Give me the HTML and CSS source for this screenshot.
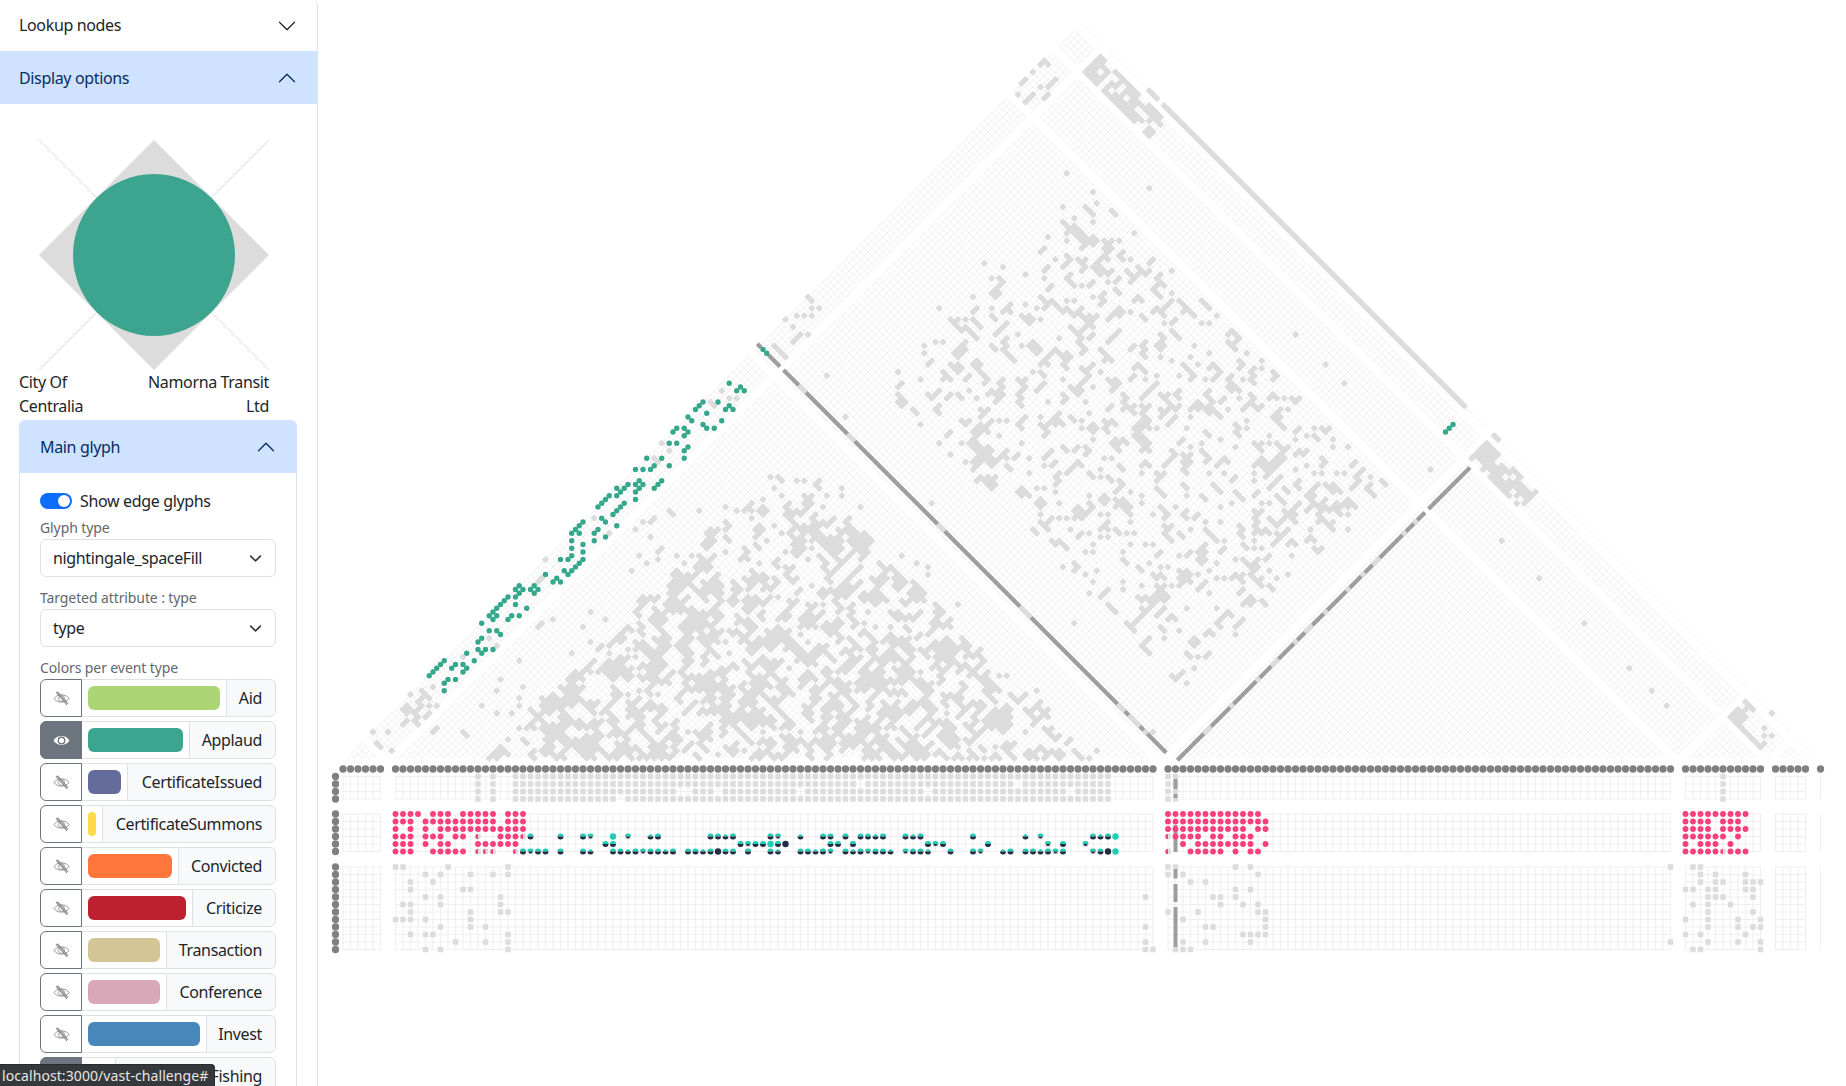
FILE: index.html
```html
<!DOCTYPE html>
<html lang="en">
<head>
<meta charset="utf-8">
<title>VAST Challenge</title>
<link rel="stylesheet" href="styles.css">
</head>
<body>
<aside class="sidebar">
  <div class="acc-head">
    <span>Lookup nodes</span>
    <svg class="chev" viewBox="0 0 16 16"><path d="M1.646 4.646a.5.5 0 0 1 .708 0L8 10.293l5.646-5.647a.5.5 0 0 1 .708.708l-6 6a.5.5 0 0 1-.708 0l-6-6a.5.5 0 0 1 0-.708z"/></svg>
  </div>
  <div class="acc-head active">
    <span>Display options</span>
    <svg class="chev up" viewBox="0 0 16 16"><path d="M1.646 4.646a.5.5 0 0 1 .708 0L8 10.293l5.646-5.647a.5.5 0 0 1 .708.708l-6 6a.5.5 0 0 1-.708 0l-6-6a.5.5 0 0 1 0-.708z"/></svg>
  </div>
  <svg class="legend" viewBox="0 0 230 230">
    <line x1="0" y1="0" x2="230" y2="230"/>
    <line x1="230" y1="0" x2="0" y2="230"/>
    <polygon points="115,0 230,115 115,230 0,115"/>
    <circle cx="115" cy="115" r="81"/>
  </svg>
  <div class="names">
    <div class="name-left">City Of Centralia</div>
    <div class="name-right">Namorna Transit Ltd</div>
  </div>
  <section class="inner">
    <div class="inner-head">
      <span>Main glyph</span>
      <svg class="chev up" viewBox="0 0 16 16"><path d="M1.646 4.646a.5.5 0 0 1 .708 0L8 10.293l5.646-5.647a.5.5 0 0 1 .708.708l-6 6a.5.5 0 0 1-.708 0l-6-6a.5.5 0 0 1 0-.708z"/></svg>
    </div>
    <div class="inner-body">
      <div class="switch-row"><span class="switch"></span><span>Show edge glyphs</span></div>
      <div class="field-label">Glyph type</div>
      <div class="select"><span>nightingale_spaceFill</span><svg viewBox="0 0 16 16"><path d="m2 5 6 6 6-6"/></svg></div>
      <div class="field-label">Targeted attribute : type</div>
      <div class="select"><span>type</span><svg viewBox="0 0 16 16"><path d="m2 5 6 6 6-6"/></svg></div>
      <div class="field-label">Colors per event type</div>
      <div class="rows" id="rows"></div>
    </div>
  </section>
</aside>
<main class="canvas" id="canvas"></main>
<div class="status">localhost:3000/vast-challenge#</div>
<script src="matrix.js"></script>
</body>
</html>
```
FILE: styles.css
```css
* { box-sizing: border-box; }
html, body { margin: 0; height: 100%; }
body {
  display: flex;
  overflow: hidden;
  height: 1086px;
  background: #fff;
  color: #212529;
  font-family: "Noto Sans", sans-serif;
  font-size: 16px;
  line-height: 24px;
  letter-spacing: -0.35px;
}
.sidebar {
  flex: 0 0 318px;
  height: 1086px;
  overflow: hidden;
  border-right: 1px solid #dee2e6;
  border-top-right-radius: 6px;
}
.acc-head {
  height: 51px;
  padding: 0 20px 0 19px;
  display: flex;
  align-items: center;
  justify-content: space-between;
}
.acc-head span { position: relative; top: -1px; }
.acc-head.active span { top: 0; }
.acc-head.active {
  height: 53px;
  background: #cfe2ff;
  color: #052c65;
}
.chev { width: 20px; height: 20px; fill: #212529; }
.chev.up { transform: rotate(180deg); fill: #052c65; }
.legend { display: block; width: 230px; height: 230px; margin: 36px 0 0 39px; }
.legend line { stroke: #cfcfcf; stroke-width: 0.7; }
.legend polygon { fill: #dcdcdc; }
.legend circle { fill: #3da58f; }
.names {
  display: flex;
  justify-content: space-between;
  width: 250px;
  margin: 0 0 2px 19px;
}
.name-left { width: 80px; }
.name-right { width: 130px; text-align: right; }
.inner { width: 278px; margin-left: 19px; }
.inner-head {
  height: 53px;
  padding: 0 21px 0 21px;
  display: flex;
  align-items: center;
  justify-content: space-between;
  background: #cfe2ff;
  color: #052c65;
  border-radius: 6px 6px 0 0;
}
.inner-body {
  padding: 16px 20px 0;
  border-left: 1px solid #dee2e6;
  border-right: 1px solid #dee2e6;
}
.switch-row { display: flex; align-items: center; gap: 8px; height: 24px; margin-bottom: 5px; }
.switch {
  width: 32px;
  height: 16px;
  border-radius: 8px;
  background: #0d6efd;
  display: flex;
  justify-content: flex-end;
  align-items: center;
  padding-right: 2px;
}
.switch::after { content: ""; width: 12px; height: 12px; border-radius: 50%; background: #fff; }
.field-label { font-size: 14px; line-height: 19px; padding-bottom: 2px; color: #5f6770; letter-spacing: -0.1px; }
.select {
  height: 38px;
  margin-bottom: 11px;
  padding: 0 13px 0 12px;
  display: flex;
  align-items: center;
  justify-content: space-between;
  border: 1px solid #dee2e6;
  border-radius: 6px;
}
.select svg { width: 13px; height: 13px; fill: none; stroke: #343a40; stroke-width: 2; stroke-linecap: round; stroke-linejoin: round; }
.rows { display: flex; flex-direction: column; gap: 4px; }
.row { display: flex; height: 38px; }
.eye {
  flex: 0 0 42px;
  display: flex;
  align-items: center;
  justify-content: center;
  border: 1px solid #6c757d;
  border-radius: 6px 0 0 6px;
  background: #fff;
}
.eye svg { width: 17px; height: 17px; }
.eye.on { background: #6c757d; }
.eye .outline { fill: none; stroke: #9a9a9a; stroke-width: 1; }
.eye .slash { fill: none; stroke: #8a8a8a; stroke-width: 1.1; }
.eye .ball { fill: #fff; }
.eye .pupil { fill: #6c757d; }
.swatch-cell {
  display: flex;
  align-items: center;
  padding: 0 6px;
  border-top: 1px solid #dee2e6;
  border-bottom: 1px solid #dee2e6;
}
.swatch { display: block; height: 24px; border-radius: 6px; }
.row-label {
  flex: 1;
  display: flex;
  align-items: center;
  justify-content: flex-end;
  padding-right: 13px;
  border: 1px solid #dee2e6;
  border-radius: 0 6px 6px 0;
  background: #f8f9fa;
}
.canvas { flex: 1; height: 1086px; overflow: hidden; }
.canvas svg { display: block; }
.status {
  position: absolute;
  left: 0;
  bottom: 0;
  height: 22px;
  padding: 0 6px 0 2px;
  background: #35393b;
  border: 1px solid #2a2a2a;
  border-left: 0;
  border-bottom: 0;
  border-top-right-radius: 4px;
  color: #e6e6e6;
  font-size: 14px;
  line-height: 21px;
  letter-spacing: 0.08px;
  white-space: nowrap;
}
```
FILE: matrix.js
```js
(function () {
  var events = [
    ['Aid', '#acd576', 132, false], ['Applaud', '#3ca58f', 95, true],
    ['CertificateIssued', '#636c9b', 33, false], ['CertificateSummons', '#ffd94a', 8, false],
    ['Convicted', '#ff763c', 84, false], ['Criticize', '#bd2130', 98, false],
    ['Transaction', '#d3c596', 72, false], ['Conference', '#d8a8b9', 72, false],
    ['Invest', '#4787b9', 112, false], ['Fishing', '#cccccc', 21, true]
  ];
  var eyeOff = '<svg viewBox="0 0 17 17"><path class="outline" d="M1 8.5C4 3.6 13 3.6 16 8.5C13 13.4 4 13.4 1 8.5Z"/><circle class="outline" cx="8.5" cy="8.5" r="3"/><path class="slash" d="M3 2.2L14 14.8M4.4 1.6L15 13.6"/></svg>';
  var eyeOn = '<svg viewBox="0 0 17 17"><path class="ball" d="M0.5 8.5C4 2.6 13 2.6 16.5 8.5C13 14.4 4 14.4 0.5 8.5Z"/><circle class="pupil" cx="8.5" cy="8.5" r="3.9"/><circle class="ball" cx="8.5" cy="8.5" r="2.6"/></svg>';
  var rows = document.getElementById('rows');
  rows.innerHTML = events.map(function (e) {
    return '<div class="row"><div class="eye' + (e[3] ? ' on' : '') + '">' + (e[3] ? eyeOn : eyeOff) +
      '</div><div class="swatch-cell"><span class="swatch" style="width:' + e[2] + 'px;background:' + e[1] +
      '"></span></div><div class="row-label">' + e[0] + '</div></div>';
  }).join('');

  // --- matrix geometry: cells are addressed by node slots (i < j) ---
  var X0 = 343, S = 7.5, H = 3.75, BASE = 762, NODE_Y = 769;
  var groups = [[0, 5], [7, 108], [110, 177], [179, 189], [191, 195], [197, 197]];
  var rowGroups = [[776.5, 4], [814, 6], [867, 12]];
  var GRAY = '#dcdcdc', DARK = '#9d9d9d', GREEN = '#35a78d', PINK = '#f8417c', TEAL = '#1ecdb4', INK = '#252b40';
  function cx(i, j) { return X0 + H * (i + j); }
  function cy(i, j) { return BASE - H * (j - i); }
  function sx(s) { return X0 + S * s; }
  function snap(x, y) { return [Math.round((x + y - 1105) / 7.5), Math.round((x - y + 419) / 7.5)]; }
  function f(n) { return n.toFixed(2); }

  var seed = 20230611;
  function rnd() {
    seed = (seed + 0x6D2B79F5) | 0;
    var t = Math.imul(seed ^ (seed >>> 15), 1 | seed);
    t = (t + Math.imul(t ^ (t >>> 7), 61 | t)) ^ t;
    return ((t ^ (t >>> 14)) >>> 0) / 4294967296;
  }

  // lattice
  var lat = '';
  groups.forEach(function (a, ai) {
    groups.forEach(function (b, bi) {
      if (bi < ai) return;
      var i, j;
      if (ai === bi) {
        for (i = a[0]; i < a[1]; i++) lat += 'M' + f(cx(i, i + 1)) + ' ' + f(cy(i, i + 1)) + 'L' + f(cx(i, a[1])) + ' ' + f(cy(i, a[1]));
        for (j = a[0] + 1; j <= a[1]; j++) lat += 'M' + f(cx(a[0], j)) + ' ' + f(cy(a[0], j)) + 'L' + f(cx(j - 1, j)) + ' ' + f(cy(j - 1, j));
      } else {
        for (i = a[0]; i <= a[1]; i++) lat += 'M' + f(cx(i, b[0])) + ' ' + f(cy(i, b[0])) + 'L' + f(cx(i, b[1])) + ' ' + f(cy(i, b[1]));
        for (j = b[0]; j <= b[1]; j++) lat += 'M' + f(cx(a[0], j)) + ' ' + f(cy(a[0], j)) + 'L' + f(cx(a[1], j)) + ' ' + f(cy(a[1], j));
      }
    });
  });

  // gray cells
  var on = {};
  function key(i, j) { return i + ',' + j; }
  function put(i, j) { on[key(i, j)] = 1; }
  var noise = {};
  function coarse(i, j, size) {
    var k = Math.floor(i / size) + ':' + Math.floor(j / size) + ':' + size;
    if (!(k in noise)) noise[k] = 0.72 + rnd() * 0.56;
    return noise[k];
  }
  function fill(iMin, iMax, jMin, jMax, bonus, prob) {
    for (var i = iMin; i <= iMax; i++) {
      for (var j = jMax; j >= jMin; j--) {
        if (j <= i) continue;
        var base = prob(i, j);
        if (base <= 0) continue;
        var n = (on[key(i - 1, j)] ? 1 : 0) + (on[key(i, j + 1)] ? 1 : 0);
        if (rnd() < base * coarse(i, j, 7) + (base > 0.1 ? n * bonus : 0)) put(i, j);
      }
    }
  }
  function block(iMin, iMax, jMin, jMax, prob) {
    for (var i = iMin; i <= iMax; i++) {
      for (var j = jMin; j <= jMax; j++) {
        if (rnd() < prob(i, j)) put(i, j);
      }
    }
  }
  // community G1 x G1
  fill(8, 107, 9, 108, 0.17, function (i, j) {
    var span = j - i;
    if (i >= 19 && j <= 100 && span <= 76) return 0.34;
    if (i >= 19 && j <= 104 && span <= 82) return 0.05;
    if (i >= 88 && j <= 104) return 0.22;
    if (i < 19 && j < 95 && span < 82 && j > i + 3) return 0.05;
    return 0;
  });
  // G1 x G2
  fill(22, 102, 122, 176, 0.14, function (i, j) {
    var edge = Math.min(i - 22, 102 - i, j - 122, 176 - j);
    if (edge < 3) return 0.14;
    return 0.22;
  });
  fill(8, 108, 112, 177, 0, function (i, j) {
    return (i < 22 || i > 102 || j < 122) ? 0.002 : 0;
  });
  // G0 x G1 and G0 x G2 corners
  fill(0, 5, 7, 20, 0.1, function () { return 0.28; });
  fill(0, 5, 112, 124, 0.05, function () { return 0.2; });
  // dense blocks
  block(7, 24, 191, 195, function (i, j) {
    if (j === 195 && i > 8 && i < 11) return 0.2;
    if (j === 194 && i === 11) return 0;
    if (j === 193 && i === 9) return 0;
    if (j === 191 && i > 20) return 0.4;
    if (j === 195 && i > 19) return 0.5;
    return 0.86;
  });
  block(110, 123, 191, 195, function (i, j) {
    if (j === 195 && i > 114) return 0.25;
    if (j === 191 && i < 113) return 0.6;
    return (j + i) % 7 === 0 ? 0.55 : 0.86;
  });
  block(179, 187, 191, 195, function (i, j) {
    if (i > 181 && i < 185 && j > 191 && j < 195) return 0.05;
    if ((j === 195 && i > 183) || (j === 191 && i < 180)) return 0.3;
    return 0.88;
  });
  var i0;
  for (i0 = 22; i0 <= 102; i0++) put(i0, 197);
  [18, 19, 20, 110, 111].forEach(function (i) { put(i, 197); });
  // isolated cells, read from the picture (full-size coordinates)
  [[1667, 705], [1772, 713], [1325, 363], [1344, 382], [1431, 469], [1502, 540], [1539, 578], [1297, 336], [1149, 188], [1065, 173],
   [1583, 621], [1628, 666], [1654, 692]].forEach(function (p) { var c = snap(p[0], p[1]); put(c[0], c[1]); });
  // G0 x G3, zoom coordinates
  [[130, 180], [120, 190], [140, 190], [98, 213], [70, 242], [62, 250], [55, 283], [120, 260], [155, 250], [165, 240], [145, 260], [138, 288], [128, 298], [90, 290], [80, 300], [100, 280]]
    .forEach(function (p) { var c = snap(1000 + p[0] / 3, p[1] / 3); put(c[0], c[1]); });
  // gray cells among the green ones
  [[965, 182], [995, 205], [1010, 195], [935, 215], [945, 228], [785, 340], [808, 362], [763, 385], [775, 396], [582, 565], [625, 610], [436, 688], [430, 750], [418, 762], [268, 925], [289, 945], [190, 980], [100, 1075]]
    .forEach(function (p) { var c = snap(400 + p[0] / 3, 330 + p[1] / 3); put(c[0], c[1]); });

  var d = '';
  Object.keys(on).forEach(function (k) {
    var p = k.split(',').map(Number), x = cx(p[0], p[1]), y = cy(p[0], p[1]);
    d += 'M' + f(x) + ' ' + f(y - H) + 'L' + f(x + H) + ' ' + f(y) + 'L' + f(x) + ' ' + f(y + H) + 'L' + f(x - H) + ' ' + f(y) + 'Z';
  });

  // dark strips
  var svg = '';
  function strip(i, j, dirI) {
    var x = cx(i, j), y = cy(i, j);
    var angle = dirI ? 45 : -45;
    return '<rect x="' + f(x - 2.75) + '" y="' + f(y - 2.1) + '" width="5.5" height="4.2" transform="rotate(' + angle + ' ' + f(x) + ' ' + f(y) + ')"/>';
  }
  var light = '', strips = '';
  var gapA = { 11: 1, 12: 1, 24: 1, 25: 1, 48: 1, 49: 1, 70: 1, 71: 1, 72: 1, 96: 1, 97: 1, 99: 1, 100: 1, 101: 1, 103: 1 };
  var gapB = { 119: 1, 120: 1, 126: 1, 133: 1, 137: 1, 138: 1, 143: 1, 146: 1, 147: 1, 151: 1, 157: 1, 161: 1, 164: 1, 165: 1, 172: 1, 175: 1 };
  function diamond(x, y) {
    return 'M' + f(x) + ' ' + f(y - H) + 'L' + f(x + H) + ' ' + f(y) + 'L' + f(x) + ' ' + f(y + H) + 'L' + f(x - H) + ' ' + f(y) + 'Z';
  }
  var i, j;
  for (i = 7; i <= 108; i++) {
    if (gapA[i]) light += diamond(cx(i, 111), cy(i, 111)); else strips += strip(i, 111, true);
  }
  [0, 3, 4, 5].forEach(function (k) { strips += strip(k, 111, true); });
  for (j = 112; j <= 189; j++) {
    if (j === 178) continue;
    if (gapB[j]) light += diamond(cx(111, j), cy(111, j)); else strips += strip(111, j, false);
  }

  // green dots, zoom coordinates
  var greens = [988,160,1022,171,1011,183,1033,183,909,216,954,216,897,228,886,239,988,228,977,239,999,239,920,250,864,261,875,272,965,272,909,284,920,295,943,295,830,295,853,295,819,306,864,306,853,317,808,340,830,340,864,351,853,362,853,385,740,385,785,385,763,407,808,407,751,419,706,419,729,419,718,452,707,463,729,463,718,475,684,463,672,475,661,486,650,475,650,497,627,497,707,486,707,509,785,452,774,463,763,475,616,509,605,520,594,531,672,520,661,531,650,542,639,554,605,565,616,576,650,587,594,599,582,610,616,621,582,632,549,576,537,587,526,599,515,610,537,610,515,632,549,644,515,655,549,666,515,677,504,689,481,689,549,689,537,700,526,711,515,722,492,722,504,733,436,733,470,745,459,756,481,756,403,767,392,778,414,778,403,790,357,767,346,778,369,778,357,790,346,801,324,801,312,812,301,824,290,835,346,824,380,835,279,846,267,857,290,857,278,869,335,857,324,869,357,857,245,880,267,902,290,902,301,914,245,925,234,936,234,958,256,958,245,970,279,958,200,970,222,992,133,992,122,1003,110,1014,99,1025,88,1037,166,1003,155,1014,189,1003,200,1014,189,1026,144,1048,133,1059,166,1048,133,1082];
  var dots = '';
  function greenAt(i, j) { dots += '<circle cx="' + f(cx(i, j)) + '" cy="' + f(cy(i, j)) + '" r="2.7"/>'; }
  for (var g = 0; g < greens.length; g += 2) {
    var c = snap(400 + greens[g] / 3, 330 + greens[g + 1] / 3);
    greenAt(c[0], c[1]);
  }
  [[1, 111], [2, 111], [103, 191], [103, 192], [103, 193]].forEach(function (p) { greenAt(p[0], p[1]); });

  svg += '<path d="' + lat + '" fill="none" stroke="#e4e4e4" stroke-width="0.55"/>';
  svg += '<path d="' + d + light + '" fill="' + GRAY + '"/>';
  svg += '<g fill="' + DARK + '">' + strips + '</g>';
  svg += '<g fill="' + GREEN + '">' + dots + '</g>';

  // lower panel grid
  var pg = '';
  rowGroups.forEach(function (r) {
    var top = r[0], bottom = r[0] + 7.5 * (r[1] - 1);
    groups.forEach(function (c) {
      for (var s = c[0]; s <= c[1]; s++) pg += 'M' + sx(s) + ' ' + top + 'V' + bottom;
      if (c[0] === c[1]) return;
      for (var k = 0; k < r[1]; k++) pg += 'M' + sx(c[0]) + ' ' + (top + 7.5 * k) + 'H' + sx(c[1]);
    });
  });
  svg += '<path d="' + pg + '" fill="none" stroke="#efefef" stroke-width="1.1"/>';

  function rowY(rg, k) { return rowGroups[rg][0] + 7.5 * k; }
  var sq = '';
  function square(s, y) { sq += 'M' + f(sx(s) - 2.7) + ' ' + f(y - 2.7) + 'h5.4v5.4h-5.4Z'; }

  // first row group
  var r0cols = [18, 20, 110, 111, 184], s0;
  for (s0 = 23; s0 <= 102; s0++) r0cols.push(s0);
  var r0gaps = { '2:45': 1, '2:46': 1, '2:50': 1, '2:61': 1, '2:78': 1, '1:90': 1, '3:37': 1, '2:97': 1, '1:69': 1 };
  r0cols.forEach(function (s) {
    for (var k = 0; k < 4; k++) if (!r0gaps[k + ':' + s]) square(s, rowY(0, k));
  });

  // third row group
  [
    [7, 8, 14, 22, 110, 111, 119, 121, 180, 181, 177],
    [11, 13, 17, 20, 22, 110, 112, 122, 181, 183, 187],
    [9, 12, 113, 115, 181, 183, 184, 187, 188, 189],
    [9, 16, 17, 119, 121, 179, 180, 182, 183, 187, 188],
    [11, 13, 21, 107, 116, 117, 119, 182, 183, 184, 188],
    [8, 9, 13, 21, 117, 120, 122, 180, 182, 185],
    [9, 17, 21, 22, 110, 114, 122, 123, 182, 188],
    [7, 8, 9, 11, 17, 112, 123, 179, 182, 186, 189],
    [13, 17, 19, 107, 115, 116, 123, 182, 186, 188, 189],
    [9, 11, 12, 22, 120, 121, 122, 123, 179, 181, 187],
    [15, 19, 22, 107, 112, 115, 121, 177, 182, 186, 189],
    [11, 13, 22, 107, 108, 111, 112, 113, 180, 181, 189]
  ].forEach(function (row, k) { row.forEach(function (s) { square(s, rowY(2, k)); }); });

  // mixed cells in the second row group
  var mixes = [[18, 3], [24, 3], [110, 3], [18, 5], [19, 5], [20, 5], [23, 5], [24, 5], [110, 5], [184, 5]];
  mixes.forEach(function (m) { square(m[0], rowY(1, m[1])); });
  svg += '<path d="' + sq + '" fill="' + GRAY + '"/>';

  // dark column in the lower panel
  var col = '';
  [[779, 789], [794, 798], [825, 852], [869, 878.5], [884, 902], [907, 947]].forEach(function (v) {
    col += '<rect x="' + (sx(111) - 2) + '" y="' + v[0] + '" width="4" height="' + (v[1] - v[0]) + '"/>';
  });
  svg += '<g fill="' + DARK + '">' + col + '</g>';

  // pink dots
  var pink = [
    [7,8,9,10,12,13,14,16,17,18,19,20,22,23,24, 110,111,112,113,114,115,116,117,118,119,120,121,122, 179,180,181,182,183,184,185,186,187],
    [7,8,9,11,12,13,14,15,16,17,18,19,20,22,23,24, 110,111,112,113,114,115,116,117,118,119,120,121,122,123, 179,180,181,182,184,185,186],
    [7,9,11,13,14,15,16,17,18,19,20,21,22,23,24, 110,111,112,113,114,115,116,117,118,119,120,122,123, 179,180,181,182,184,185,186,187],
    [7,8,9,11,12,13,15,16,21,22,23, 111,112,113,114,116,117,119,120,121, 179,180,181,182,183,184,186],
    [7,8,9,11,13,14,18,19,20,21,22,23, 112,114,115,116,117,118,119,120,121,123, 179,181,182,183,185],
    [7,8,9,12,13,14,15,16, 113,114,115,116,117,119,121,122, 179,180,181,182,183,185,186,187]
  ];
  var pd = '';
  pink.forEach(function (row, k) {
    row.forEach(function (s) { pd += '<circle cx="' + sx(s) + '" cy="' + rowY(1, k) + '" r="2.95"/>'; });
  });
  mixes.forEach(function (m) {
    var x = sx(m[0]), y = rowY(1, m[1]);
    pd += '<path d="M' + x + ' ' + (y - 2.6) + 'A2.6 2.6 0 0 0 ' + x + ' ' + (y + 2.6) + 'Z"/>';
  });
  svg += '<g fill="' + PINK + '">' + pd + '</g>';

  // two-coloured glyphs
  var teal = {
    3: [25,29,32,33,36,38,41,42,49,50,51,52,57,58,61,64,65,67,69,70,71,72,75,76,77,84,91,93,100,101,102,103],
    4: [35,36,53,54,55,56,57,58,59,65,66,68,78,79,80,86,94,96,99],
    5: [24,25,26,27,29,32,33,36,37,38,39,40,41,42,43,44,46,47,48,49,50,51,52,54,57,58,61,62,63,64,65,67,68,69,70,71,72,73,75,76,77,78,81,84,85,88,89,91,92,93,94,95,96,100,101,102,103]
  };
  var fullTeal = { '3:36': 1, '3:103': 1, '5:103': 1, '4:57': 1 };
  var fullInk = { '4:59': 1, '5:102': 1, '5:50': 1 };
  var boxed = '', gt = '', gi = '';
  Object.keys(teal).forEach(function (k) {
    teal[k].forEach(function (s) {
      var x = sx(s), y = rowY(1, +k), id = k + ':' + s, h = (s * 7 + (+k) * 3) % 5;
      if (fullTeal[id]) { gt += '<circle cx="' + x + '" cy="' + y + '" r="3.2"/>'; return; }
      if (fullInk[id]) { gi += '<circle cx="' + x + '" cy="' + y + '" r="3.2"/>'; return; }
      if (h === 0 || h === 3) boxed += 'M' + f(x - 2.7) + ' ' + f(y - 2.7) + 'h5.4v5.4h-5.4Z';
      var rt = h === 1 ? 2.2 : 3, ri = h === 0 ? 2 : 3;
      gt += '<path d="M' + f(x - rt) + ' ' + y + 'A' + rt + ' ' + rt + ' 0 0 1 ' + f(x + rt) + ' ' + y + 'Z"/>';
      gi += '<path d="M' + f(x - ri) + ' ' + y + 'A' + ri + ' ' + ri + ' 0 0 0 ' + f(x + ri) + ' ' + y + 'Z"/>';
    });
  });
  svg += '<path d="' + boxed + '" fill="' + GRAY + '"/>';
  svg += '<g fill="' + TEAL + '">' + gt + '</g><g fill="' + INK + '">' + gi + '</g>';

  // nodes
  var nodes = '';
  groups.forEach(function (c) {
    for (var s = c[0]; s <= c[1]; s++) nodes += '<circle cx="' + sx(s) + '" cy="' + NODE_Y + '" r="3.65"/>';
  });
  rowGroups.forEach(function (r) {
    for (var k = 0; k < r[1]; k++) nodes += '<circle cx="335.5" cy="' + (r[0] + 7.5 * k) + '" r="3.65"/>';
  });
  svg += '<g fill="#808080">' + nodes + '</g>';

  document.getElementById('canvas').innerHTML =
    '<svg xmlns="http://www.w3.org/2000/svg" width="1528" height="1086" viewBox="318 0 1528 1086">' + svg + '</svg>';
})();
```
